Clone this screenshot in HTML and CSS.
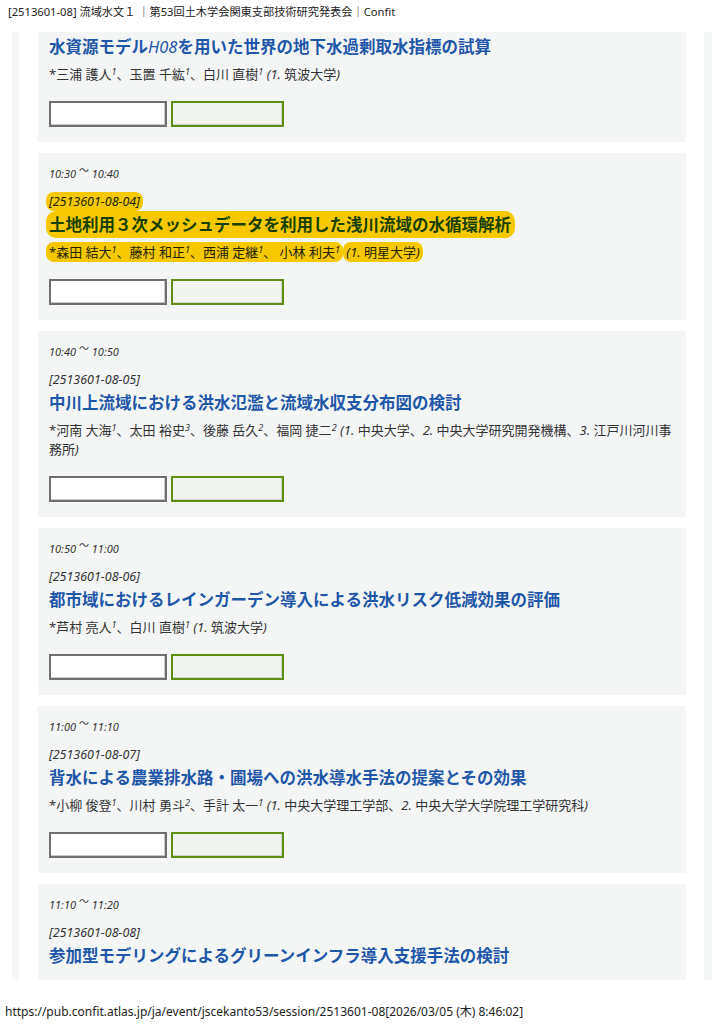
FILE: index.html
```html
<!DOCTYPE html>
<html lang="ja">
<head>
<meta charset="utf-8">
<title>[2513601-08] 流域水文１ ｜第53回土木学会関東支部技術研究発表会｜Confit</title>
<link rel="stylesheet" href="styles.css">
</head>
<body>
<header class="print-head">[2513601-08] 流域水文１ ｜第53回土木学会関東支部技術研究発表会｜Confit</header>
<main class="page">
  <div class="panel">
    <article class="card cut">
      <h2 class="title">水資源モデル<i class="lat">H08</i>を用いた世界の地下水過剰取水指標の試算</h2>
      <p class="authors">*三浦 護人<sup>1</sup>、玉置 千紘<sup>1</sup>、白川 直樹<sup>1</sup> <span class="aff"><i>(1.</i> 筑波大学<i>)</i></span></p>
      <div class="btns"><span class="btn btn-a"></span><span class="btn btn-b"></span></div>
    </article>

    <article class="card">
      <p class="time">10:30 <span class="tilde">〜</span> 10:40</p>
      <p class="code"><mark class="hl">[2513601-08-04]</mark></p>
      <h2 class="title"><mark class="hl hl-title">土地利用３次メッシュデータを利用した浅川流域の水循環解析</mark></h2>
      <p class="authors"><mark class="hl">*森田 結大<sup>1</sup>、藤村 和正<sup>1</sup>、西浦 定継<sup>1</sup>、 小林 利夫<sup>1</sup></mark> <mark class="hl"><span class="aff"><i>(1.</i> 明星大学<i>)</i></span></mark></p>
      <div class="btns"><span class="btn btn-a"></span><span class="btn btn-b"></span></div>
    </article>

    <article class="card">
      <p class="time">10:40 <span class="tilde">〜</span> 10:50</p>
      <p class="code">[2513601-08-05]</p>
      <h2 class="title">中川上流域における洪水氾濫と流域水収支分布図の検討</h2>
      <p class="authors">*河南 大海<sup>1</sup>、太田 裕史<sup>3</sup>、後藤 岳久<sup>2</sup>、福岡 捷二<sup>2</sup> <span class="aff"><i>(1.</i> 中央大学、<i>2.</i> 中央大学研究開発機構、<i>3.</i> 江戸川河川事務所<i>)</i></span></p>
      <div class="btns"><span class="btn btn-a"></span><span class="btn btn-b"></span></div>
    </article>

    <article class="card">
      <p class="time">10:50 <span class="tilde">〜</span> 11:00</p>
      <p class="code">[2513601-08-06]</p>
      <h2 class="title">都市域におけるレインガーデン導入による洪水リスク低減効果の評価</h2>
      <p class="authors">*芦村 亮人<sup>1</sup>、白川 直樹<sup>1</sup> <span class="aff"><i>(1.</i> 筑波大学<i>)</i></span></p>
      <div class="btns"><span class="btn btn-a"></span><span class="btn btn-b"></span></div>
    </article>

    <article class="card">
      <p class="time">11:00 <span class="tilde">〜</span> 11:10</p>
      <p class="code">[2513601-08-07]</p>
      <h2 class="title">背水による農業排水路・圃場への洪水導水手法の提案とその効果</h2>
      <p class="authors">*小柳 俊登<sup>1</sup>、川村 勇斗<sup>2</sup>、手計 太一<sup>1</sup> <span class="aff"><i>(1.</i> 中央大学理工学部、<i>2.</i> 中央大学大学院理工学研究科<i>)</i></span></p>
      <div class="btns"><span class="btn btn-a"></span><span class="btn btn-b"></span></div>
    </article>

    <article class="card">
      <p class="time">11:10 <span class="tilde">〜</span> 11:20</p>
      <p class="code">[2513601-08-08]</p>
      <h2 class="title">参加型モデリングによるグリーンインフラ導入支援手法の検討</h2>
    </article>
  </div>
</main>
<footer class="print-foot">https://pub.confit.atlas.jp/ja/event/jscekanto53/session/2513601-08[2026/03/05 (木) 8:46:02]</footer>
</body>
</html>
```
FILE: styles.css
```css
html, body {
  margin: 0;
  padding: 0;
  background: #ffffff;
}
body {
  width: 724px;
  height: 1024px;
  overflow: hidden;
  font-family: "Noto Sans", "Noto Sans CJK JP", sans-serif;
  color: #333333;
}
.print-head {
  height: 32px;
  box-sizing: border-box;
  padding: 3px 0 0 8px;
  font-size: 11.2px;
  line-height: 18px;
  color: #222222;
  white-space: nowrap;
}
.page {
  height: 948px;
  margin: 0 12px;
  background: #f5f7f7;
  overflow: hidden;
}
.panel {
  display: flow-root;
  margin: 0 8px 0 7px;
  height: 100%;
  background: #ffffff;
  padding: 0 18px 0 19px;
  box-sizing: border-box;
}
.card {
  background: #f4f6f6;
  padding: 13px 11px 15px 11px;
  margin-bottom: 11px;
}
.card.cut {
  padding-top: 3px;
}
.card p, .card h2 {
  margin: 0;
}
.time {
  font-size: 11px;
  line-height: 16px;
  font-style: italic;
  color: #333333;
}
.tilde {
  position: relative;
  top: -4px;
  font-style: normal;
  font-size: 10px;
}
.code {
  margin-top: 11px !important;
  font-size: 12.5px;
  line-height: 18px;
  font-style: italic;
  color: #333333;
}
.title {
  margin-top: 2px !important;
  font-size: 16.5px;
  line-height: 24px;
  font-weight: bold;
  color: #1f57a8;
}
.cut .title {
  margin-top: 0 !important;
}
.title .lat {
  font-weight: normal;
}
.authors {
  margin-top: 6px !important;
  font-size: 13px;
  line-height: 19px;
  color: #333333;
}
.aff i {
  font-style: italic;
}
sup {
  font-size: 9px;
  font-style: italic;
  line-height: 0;
  vertical-align: 4px;
}
.hl {
  background: #f5c800;
  color: #231f00;
  border-radius: 8px;
  padding: 1px 3px;
  margin-left: -3px;
  -webkit-box-decoration-break: clone;
  box-decoration-break: clone;
}
.hl-title {
  color: #173f00;
  border-radius: 10px;
  padding: 2px 4px 2px 3px;
}
.btns {
  display: flex;
  gap: 4px;
  margin-top: 17px;
}
.btn {
  display: block;
  height: 26px;
  box-sizing: border-box;
  border: 2px solid #6f6f6f;
  box-shadow: inset -1px -1px 0 #c8c8c8;
}
.btn-a {
  width: 118px;
  background: #ffffff;
}
.btn-b {
  width: 113px;
  border-color: #5f8e16;
  background: #f2f4f2;
  box-shadow: inset -1px -1px 0 #cfd4cc;
}
.print-foot {
  padding: 23px 0 0 5px;
  font-size: 12px;
  line-height: 18px;
  color: #222222;
  white-space: nowrap;
}
```
